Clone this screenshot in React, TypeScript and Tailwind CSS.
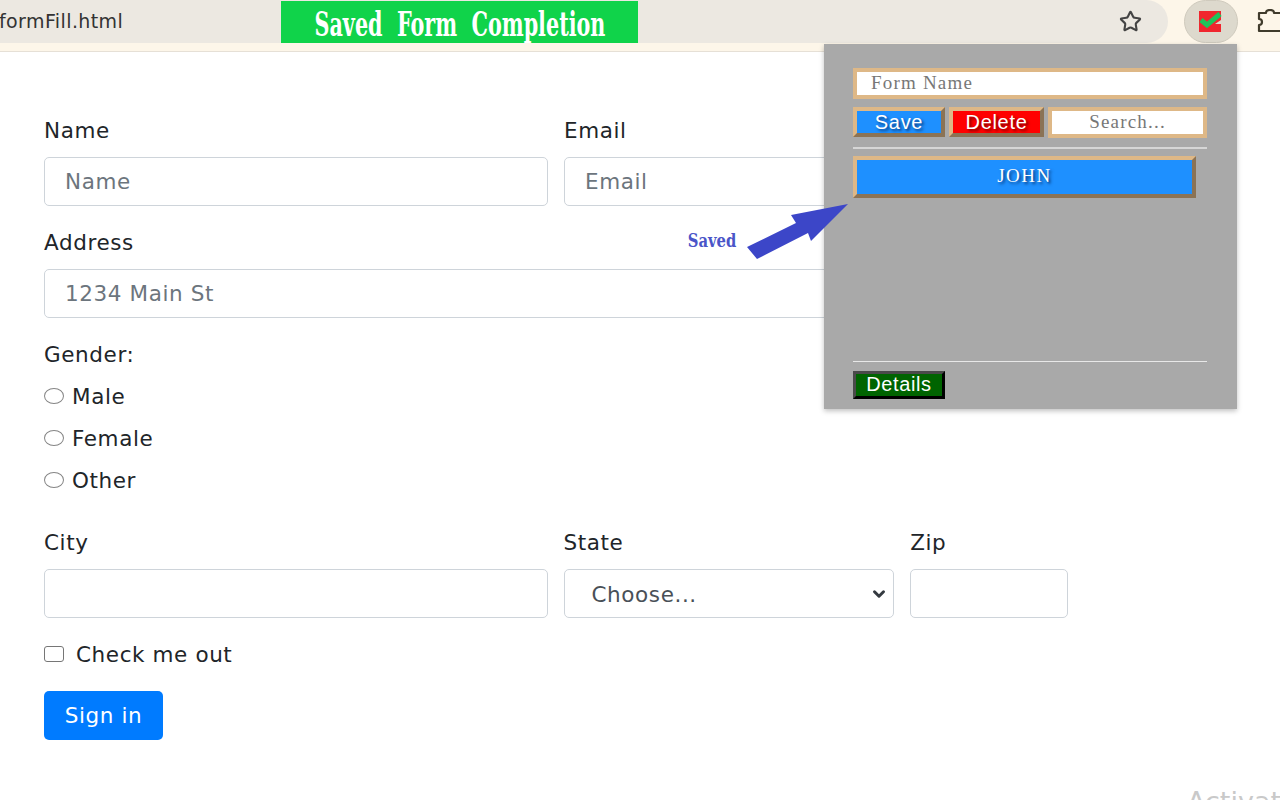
import { ChevronDown, Star } from 'lucide-react';

const labelClass = 'block h-[31px] mb-[11px] leading-[32px]';
const inputClass =
  'block w-full h-[49px] rounded-[5px] border border-[#ced4da] bg-white px-[20px] text-[21.5px] tracking-[0.6px] placeholder:text-[#6c757d]';
const tanInput =
  "w-full border-4 border-[#deb887] bg-white font-['Liberation_Serif',serif] text-[19px] tracking-[1.2px] pb-[2px] text-[#777] placeholder:text-[#777]";
const raisedBtn =
  "border-4 border-[#deb887] border-r-[#8b7355] border-b-[#8b7355] font-['Liberation_Sans',sans-serif] text-white";

const RadioRow = ({ label }: { label: string }) => (
  <label className="flex h-[31px] items-center mb-[11px] pt-[2px]">
    <input
      type="radio"
      name="gender"
      className="appearance-none w-[20px] h-[16px] rounded-[50%] border border-[#858585] bg-white mr-[8px] -mt-[3px]"
    />
    {label}
  </label>
);

const BrowserBar = () => (
  <div className="h-[52px] bg-[#fdf6e9] border-b border-[#e6e0d6] flex items-start overflow-hidden">
    <div className="w-[1168px] h-[43px] bg-[#ece8e1] rounded-r-[22px] flex items-center justify-between pr-[26px] shrink-0">
      <span className="-ml-[1px] -mt-[1px] text-[19px] tracking-[0.4px] text-[#333]">formFill.html</span>
      <Star size={23} strokeWidth={2.2} className="text-[#444]" />
    </div>
    <div className="ml-[16px] w-[54px] h-[43px] rounded-full bg-[#ddd9cd] border border-[#cfcabd] flex items-center justify-center shrink-0">
      <svg width="24" height="23" viewBox="0 0 24 23" className="mr-[3px]">
        <path d="M1 1h22v9l-6 4h6v8H1z" fill="#f0262e" />
        <path d="M3 10l6 5 13-11" fill="none" stroke="#1fc45a" strokeWidth="5" />
      </svg>
    </div>
    <svg width="26" height="24" viewBox="0 0 26 24" className="ml-[19px] mt-[9px] shrink-0">
      <path
        d="M2 4h7c0-4 8-4 8 0h8v18H2v-6c4 0 4-6 0-6z"
        fill="none"
        stroke="#403b2c"
        strokeWidth="2.2"
        strokeLinejoin="round"
      />
    </svg>
  </div>
);

const FormArea = () => (
  <form className="pt-[63px] pl-[44px] w-[1068px] text-[21.5px] tracking-[0.6px] text-[#212529]">
    <div className="grid grid-cols-2 gap-x-[16px] mb-[21px]">
      <div>
        <label className={labelClass}>Name</label>
        <input className={inputClass} placeholder="Name" />
      </div>
      <div>
        <label className={labelClass}>Email</label>
        <input className={inputClass} placeholder="Email" />
      </div>
    </div>
    <div className="mb-[21px]">
      <label className={labelClass}>Address</label>
      <input className={inputClass} placeholder="1234 Main St" />
    </div>
    <div className="mb-[31px]">
      <div className={labelClass}>Gender:</div>
      <RadioRow label="Male" />
      <RadioRow label="Female" />
      <RadioRow label="Other" />
    </div>
    <div className="flex gap-x-[16px] mb-[21px]">
      <div className="w-[504px]">
        <label className={labelClass}>City</label>
        <input className={inputClass} />
      </div>
      <div className="w-[331px]">
        <label className={labelClass}>State</label>
        <div className="relative">
          <select className={`${inputClass} appearance-none pl-[27px] pt-[3px] text-[#495057]`}>
            <option>Choose...</option>
          </select>
          <ChevronDown
            size={18}
            strokeWidth={4}
            className="absolute right-[6px] top-[16px] text-[#343a40]"
          />
        </div>
      </div>
      <div className="w-[158px]">
        <label className={labelClass}>Zip</label>
        <input className={inputClass} />
      </div>
    </div>
    <label className="flex h-[31px] items-center mb-[21px] pt-[2px]">
      <input
        type="checkbox"
        className="appearance-none w-[20px] h-[16px] rounded-[3px] border border-[#767676] bg-white mr-[12px] -mt-[3px]"
      />
      Check me out
    </label>
    <button type="button" className="w-[119px] h-[49px] rounded-[5px] bg-[#007bff] text-white pt-[2px]">
      Sign in
    </button>
  </form>
);

const Popup = () => (
  <div className="absolute left-[824px] top-[44px] w-[413px] h-[365px] bg-[#a9a9a9] shadow-[0_2px_5px_rgba(0,0,0,0.25)] pl-[29px] pr-[30px] pt-[24px] flex flex-col">
    <input className={`${tanInput} h-[31px] pl-[14px] block`} placeholder="Form Name" />
    <div className="flex mt-[8px] items-start">
      <button
        type="button"
        className={`${raisedBtn} w-[92px] h-[30px] bg-[#1e90ff] text-[20px] tracking-[0.7px] leading-[20px] [text-shadow:2px_2px_3px_#0a3a78]`}
      >
        Save
      </button>
      <button
        type="button"
        className={`${raisedBtn} ml-[4px] w-[95px] h-[30px] bg-[#ff0000] text-[20px] tracking-[0.7px] leading-[20px] [text-shadow:2px_2px_3px_#700000]`}
      >
        Delete
      </button>
      <input
        className={`${tanInput} ml-[4px] !w-[159px] h-[31px] text-center`}
        placeholder="Search..."
      />
    </div>
    <hr className="mt-[9px] border-0 h-[2px] bg-[#d6d6d6]" />
    <button
      type="button"
      className="mt-[7px] w-[343px] h-[42px] border-4 border-[#deb887] border-r-[#8b7355] border-b-[#8b7355] bg-[#1e90ff] font-['Liberation_Serif',serif] text-[19px] tracking-[1.5px] text-white pb-[1px] [text-shadow:2px_2px_3px_#0a3a78]"
    >
      JOHN
    </button>
    <hr className="mt-[163px] border-0 h-[1px] bg-[#e8e8e8]" />
    <button
      type="button"
      className="mt-[9px] w-[92px] h-[28px] border-[3px] border-[#4a4a4a] border-r-black border-b-black bg-[#006400] font-['Liberation_Sans',sans-serif] text-[20px] tracking-[0.6px] leading-[20px] text-white pb-[2px]"
    >
      Details
    </button>
  </div>
);

const App = () => (
  <div className="relative w-[1280px] h-[800px] overflow-hidden bg-white font-['DejaVu_Sans',sans-serif]">
    <BrowserBar />
    <FormArea />
    <Popup />

    <div className="absolute left-[281px] top-[1px] w-[357px] h-[42px] bg-[#10d34a] flex items-center justify-center pt-[5px]">
      <span className="whitespace-nowrap font-['DejaVu_Serif',serif] font-bold text-[33px] text-white scale-x-[0.627]">
        Saved&nbsp; Form&nbsp; Completion
      </span>
    </div>

    <span className="absolute left-[670px] top-[227px] w-[84px] text-center font-['DejaVu_Serif',serif] font-bold text-[18px] leading-[28px] text-[#4a55c8] scale-x-[0.82]">
      Saved
    </span>

    <svg width="110" height="65" viewBox="0 0 110 65" className="absolute left-[745px] top-[200px]">
      <path d="M46 15l5 8-49 24 10 12 51-26 3 8 37-37z" fill="#3c46c8" />
    </svg>

    <span className="absolute left-[1187px] top-[784px] text-[27px] leading-[36px] text-[#c9c9c9]">
      Activate
    </span>
  </div>
);

export default App;
